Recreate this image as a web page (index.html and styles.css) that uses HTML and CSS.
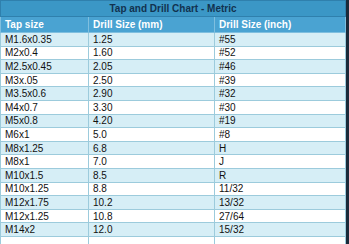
FILE: index.html
```html
<!DOCTYPE html>
<html lang="en">
<head>
  <meta charset="UTF-8" />
  <title>Tap and Drill Chart - Metric</title>
  <link rel="stylesheet" href="styles.css">
</head>
<body>
  <table class="chart">
    <tr class="title-row"><th colspan="3">Tap and Drill Chart - Metric</th></tr>
    <tr class="head-row"><th class="c1">Tap size</th><th class="c2">Drill Size (mm)</th><th>Drill Size (inch)</th></tr>
    <tr><td>M1.6x0.35</td><td>1.25</td><td>#55</td></tr>
    <tr><td>M2x0.4</td><td>1.60</td><td>#52</td></tr>
    <tr><td>M2.5x0.45</td><td>2.05</td><td>#46</td></tr>
    <tr><td>M3x.05</td><td>2.50</td><td>#39</td></tr>
    <tr><td>M3.5x0.6</td><td>2.90</td><td>#32</td></tr>
    <tr><td>M4x0.7</td><td>3.30</td><td>#30</td></tr>
    <tr><td>M5x0.8</td><td>4.20</td><td>#19</td></tr>
    <tr><td>M6x1</td><td>5.0</td><td>#8</td></tr>
    <tr><td>M8x1.25</td><td>6.8</td><td>H</td></tr>
    <tr><td>M8x1</td><td>7.0</td><td>J</td></tr>
    <tr><td>M10x1.5</td><td>8.5</td><td>R</td></tr>
    <tr><td>M10x1.25</td><td>8.8</td><td>11/32</td></tr>
    <tr><td>M12x1.75</td><td>10.2</td><td>13/32</td></tr>
    <tr><td>M12x1.25</td><td>10.8</td><td>27/64</td></tr>
    <tr><td>M14x2</td><td>12.0</td><td>15/32</td></tr>
    <tr><td>&nbsp;</td><td></td><td></td></tr>
  </table>
</body>
</html>
```

FILE: styles.css
```css
body {
  margin: 0;
  background: #1b2a3a;
  font-family: "Liberation Sans", Arial, sans-serif;
  font-size: 10px;
  line-height: 11px;
}
.chart {
  width: 346px;
  border-collapse: collapse;
  background: #fff;
}
.chart th, .chart td {
  text-align: left;
  padding: 0 4px;
  height: 12.6px;
  border: 1px solid #9ccbdc;
  color: #111;
}
.title-row th {
  background: #3b97c6;
  color: #12324f;
  text-align: center;
  height: 15px;
  border-color: #2f80ad;
}
.head-row th {
  background: #4aa3d2;
  color: #fff;
  height: 15px;
  border-color: #7fbfdf;
}
.c1 { width: 79px; }
.c2 { width: 117px; }
.chart tr:nth-child(odd) td {
  background: #d6eef6;
}
```
